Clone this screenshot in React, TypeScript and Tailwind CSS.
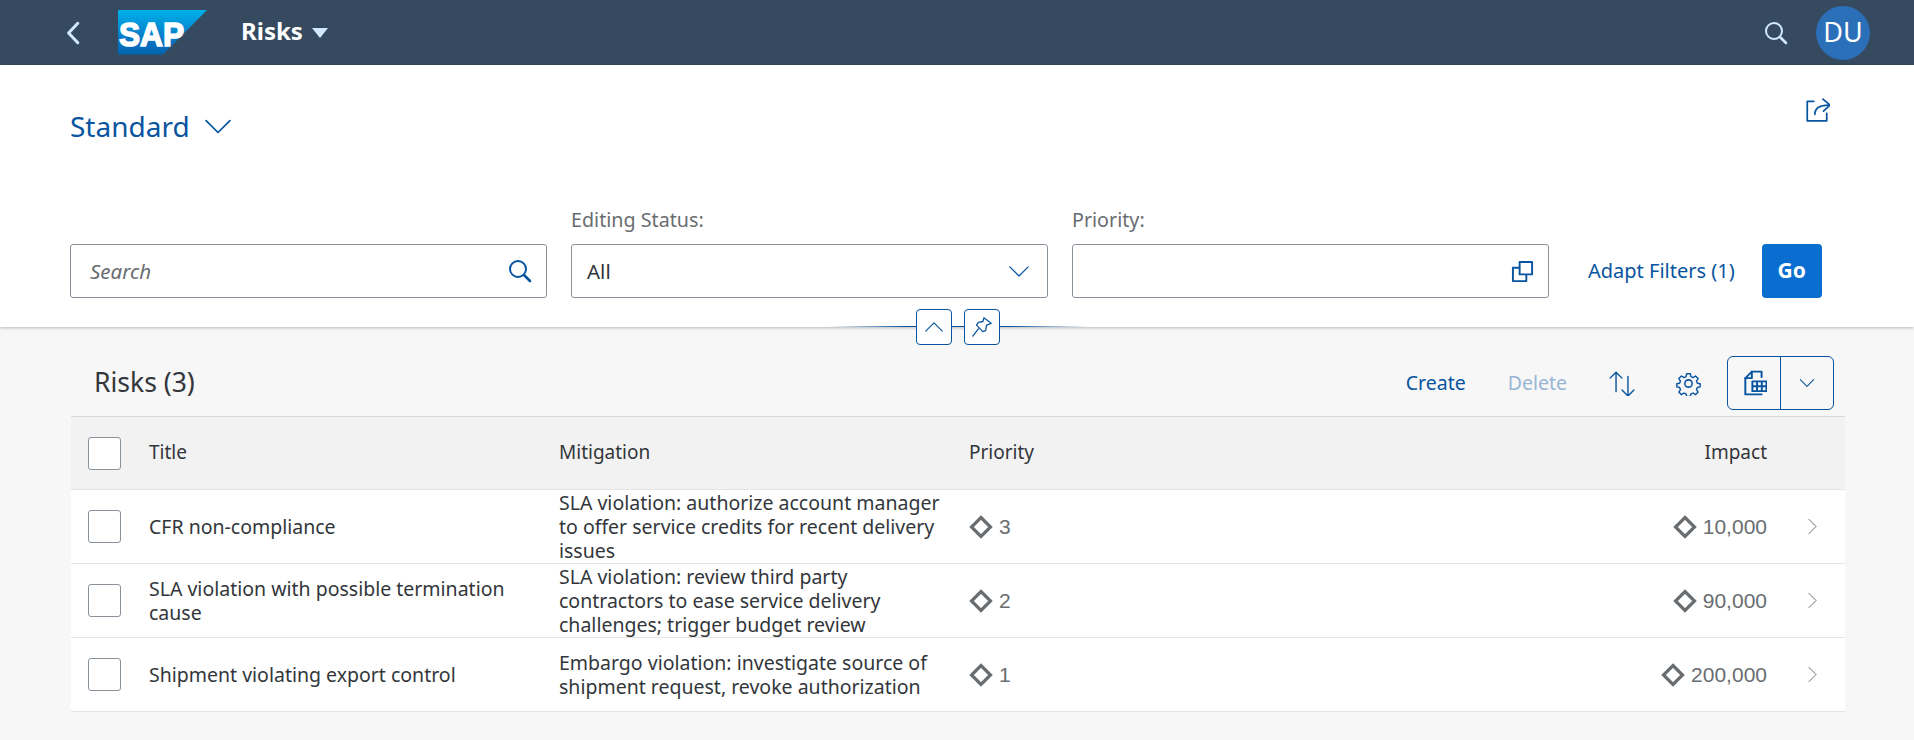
import React from 'react';

const BLUE = '#0854a0';

// Small stroke icon wrapper, every icon below is drawn on a 24 box
const Ico = ({ size = 24, color = BLUE, sw = 1.6, children }: { size?: number; color?: string; sw?: number; children: React.ReactNode }) => (
  <svg width={size} height={size} viewBox="0 0 24 24" fill="none" stroke={color} strokeWidth={sw} strokeLinecap="round" strokeLinejoin="round" className="shrink-0">
    {children}
  </svg>
);

const SearchIcon = ({ color = BLUE, size = 24, sw = 2 }: { color?: string; size?: number; sw?: number }) => (
  <Ico color={color} size={size} sw={sw}>
    <circle cx="10" cy="10" r="8" />
    <path d="M16 16l6 6" strokeWidth={sw + 0.6} />
  </Ico>
);

const Diamond = () => (
  <svg width="24" height="24" viewBox="0 0 24 24" fill="none" stroke="#6a6d70" strokeWidth="3.2" className="shrink-0">
    <path d="M12 2.500L21.500 12 12 21.500 2.500 12z" />
  </svg>
);

const SapLogo = () => (
  <svg width="90" height="45" viewBox="0 0 90 45" className="shrink-0">
    <defs>
      <linearGradient id="sapG" x1="0" y1="0" x2="0" y2="1">
        <stop offset="0" stopColor="#00b1eb" />
        <stop offset="0.75" stopColor="#0a6fc0" />
        <stop offset="1" stopColor="#0064b0" />
      </linearGradient>
    </defs>
    <path d="M0 0H89L45 44.500H0z" fill="url(#sapG)" />
    <text x="1" y="36" fontFamily="'Liberation Sans', sans-serif" fontWeight="700" fontSize="34" fill="#fff" stroke="#fff" strokeWidth="1.6" textLength="65" lengthAdjust="spacingAndGlyphs">SAP</text>
  </svg>
);

const Checkbox = () => <div className="w-[33px] h-[33px] bg-white border border-[#89919a] rounded-[3px] shrink-0" />;

const FILTER_FIELD = 'w-[477px] h-[54px] bg-white border border-[#89919a] rounded-[3px] flex items-center justify-between';

const ROWS = [
  {
    title: ['CFR non-compliance'],
    mitigation: ['SLA violation: authorize account manager', 'to offer service credits for recent delivery', 'issues'],
    priority: '3',
    impact: '10,000',
  },
  {
    title: ['SLA violation with possible termination', 'cause'],
    mitigation: ['SLA violation: review third party', 'contractors to ease service delivery', 'challenges; trigger budget review'],
    priority: '2',
    impact: '90,000',
  },
  {
    title: ['Shipment violating export control'],
    mitigation: ['Embargo violation: investigate source of', 'shipment request, revoke authorization'],
    priority: '1',
    impact: '200,000',
  },
];

const COLS = 'grid grid-cols-[78px_410px_410px_388px_410px_1fr]';

const App: React.FC = () => {
  return (
    <div className="w-[1914px] h-[740px] overflow-hidden bg-[#f7f7f7] font-['Noto_Sans',sans-serif] text-[#32363a]">
      {/* Shell bar */}
      <header className="h-[65px] bg-[#354a5f] flex items-center">
        <div className="ml-[61px] w-[57px]">
          <Ico size={26} color="#d1e8ff" sw={2.8}>
            <path d="M15.500 3L7 12l8.500 9" />
          </Ico>
        </div>
        <SapLogo />
        <span className="ml-[33px] mb-[3px] text-[24px] leading-none font-bold text-white">Risks</span>
        <svg width="16" height="10" viewBox="0 0 16 10" className="ml-[9px]">
          <path d="M0 0H16L8 10z" fill="#d1e8ff" />
        </svg>
        <div className="ml-auto mr-[44px] flex items-center gap-[28px]">
          <SearchIcon color="#d1e8ff" size={24} sw={2} />
          <div className="w-[54px] h-[54px] rounded-full bg-[#2a6fb8] text-white text-[27px] flex items-center justify-center">DU</div>
        </div>
      </header>

      {/* Filter area */}
      <section className="relative h-[262px] bg-white shadow-[0_1px_3px_rgba(0,0,0,0.25)] px-[70px]">
        <div className="flex justify-between items-start">
          <div className="flex items-center gap-[15px] pt-[39px] text-[#0854a0]">
            <span className="text-[28px] leading-[44px]">Standard</span>
            <Ico size={26} sw={1.6}>
              <path d="M1 7l11 11L23 7" />
            </Ico>
          </div>
          <div className="pt-[32px] pr-[14px]">
            <Ico size={26} sw={1.6}>
              <path d="M9 4H3v18h18v-7" />
              <path d="M10 16c0-5 4-8.500 13-8.500" />
              <path d="M17.500 2L24 7.500 18 13" />
            </Ico>
          </div>
        </div>

        <div className="flex items-end mt-[60px]">
          <div className={`${FILTER_FIELD} pl-[19px] pr-[14px]`}>
            <span className="italic text-[#6a6d70] text-[20.500px]">Search</span>
            <SearchIcon />
          </div>
          <div className="ml-[24px]">
            <div className="text-[#6a6d70] text-[19.700px] leading-[24px] mb-[12px]">Editing Status:</div>
            <div className={`${FILTER_FIELD} pl-[15px] pr-[18px]`}>
              <span className="text-[20.500px]">All</span>
              <Ico size={20} sw={1.5}>
                <path d="M1 7l11 11L23 7" />
              </Ico>
            </div>
          </div>
          <div className="ml-[24px]">
            <div className="text-[#6a6d70] text-[19.700px] leading-[24px] mb-[12px]">Priority:</div>
            <div className={`${FILTER_FIELD} pr-[14px] justify-end`}>
              <Ico size={23} sw={2}>
                <path d="M8 8H2v14h14v-6" />
                <path d="M9 2h13v13H9z" />
              </Ico>
            </div>
          </div>
          <div className="ml-[39px] h-[54px] flex items-center text-[#0854a0] text-[20px]">Adapt Filters (1)</div>
          <div className="ml-[27px] w-[60px] h-[54px] rounded-[4px] bg-[#0a6ed1] text-white text-[21px] font-bold flex items-center justify-center">Go</div>
        </div>

        {/* Collapse and pin handle on the edge of the panel */}
        <div className="absolute left-[828px] top-[244px] w-[260px] h-[36px] flex items-center justify-center">
          <div className="absolute left-0 right-0 top-[17px] h-px bg-[linear-gradient(90deg,transparent,#0854a0_30%,#0854a0_70%,transparent)]" />
          <div className="relative flex gap-[12px]">
            <div className="w-[36px] h-[36px] bg-white border border-[#0854a0] rounded-[4px] flex items-center justify-center">
              <Ico size={20} sw={1.4}>
                <path d="M2 17L12 7l10 10" />
              </Ico>
            </div>
            <div className="w-[36px] h-[36px] bg-white border border-[#0854a0] rounded-[4px] flex items-center justify-center">
              <Ico size={22} sw={1.4}>
                <path d="M14 2l8 6-5 2-1 6-3 1-7-7 2-3 5-1z" />
                <path d="M8 14l-6 8" />
              </Ico>
            </div>
          </div>
        </div>
      </section>

      {/* Table */}
      <section className="pl-[71px] pr-[69px]">
        <div className="h-[89px] flex items-center pl-[23px] pr-[11px] pt-[23px]">
          <h2 className="text-[26.500px] font-normal">Risks (3)</h2>
          <div className="ml-auto flex items-center">
            <span className="text-[#0854a0] text-[19.500px]">Create</span>
            <span className="ml-[42px] text-[#0854a0] opacity-40 text-[19.500px]">Delete</span>
            <div className="ml-[42px]">
              <Ico size={26} sw={1.3}>
                <path d="M6.500 20V2M1 7.500L6.500 2 12 7.500" />
                <path d="M17.500 6v18M12 18.500l5.500 5.500 5.500-5.500" />
              </Ico>
            </div>
            <div className="ml-[41px]">
              <Ico size={25} sw={1.5}>
                <circle cx="12" cy="12" r="3.500" />
                <path d="M10 1.500h4l.6 3.200 2.300 1 2.700-1.800 2.800 2.800-1.800 2.700 1 2.300 3 .6v3.400l-3 .6-1 2.300 1.800 2.700-2.800 2.800-2.700-1.800-2.300 1-.6 2.700h-4l-.6-2.700-2.300-1-2.700 1.800-2.800-2.800 1.800-2.700-1-2.300-3-.6v-3.400l3-.6 1-2.300-1.800-2.700 2.800-2.800 2.700 1.800 2.300-1z" transform="translate(1.300 1.300) scale(.89)" />
              </Ico>
            </div>
            <div className="ml-[26px] w-[107px] h-[54px] border border-[#0854a0] rounded-[6px] flex items-center">
              <div className="w-[53px] h-full border-r border-[#0854a0] flex items-center justify-center">
                <Ico size={26} sw={1.8}>
                  <path d="M10 1.500h9v5M10 1.500L4 7.500v15h15" />
                  <path d="M10 1.500v6H4" />
                  <path d="M10.500 10.500h13v9h-13zM10.500 15h13M14.800 10.500v9M19.200 10.500v9" />
                </Ico>
              </div>
              <div className="flex-1 flex items-center justify-center">
                <Ico size={16} sw={1.6}>
                  <path d="M2 7l10 10L22 7" />
                </Ico>
              </div>
            </div>
          </div>
        </div>

        <div className="border-t border-[#d9d9d9] bg-white">
          <div className={`${COLS} h-[73px] bg-[#f2f2f2] border-b border-[#e4e4e4] items-center text-[19px] leading-[24px] pb-[3px]`}>
            <div className="pl-[17px] pt-[3px]"><Checkbox /></div>
            <div>Title</div>
            <div>Mitigation</div>
            <div>Priority</div>
            <div className="text-right">Impact</div>
            <div />
          </div>
          {ROWS.map(row => (
            <div key={row.impact} className={`${COLS} h-[74px] border-b border-[#e4e4e4] items-center text-[19.500px] leading-[24px]`}>
              <div className="pl-[17px]"><Checkbox /></div>
              <div>
                {row.title.map(l => <div key={l}>{l}</div>)}
              </div>
              <div>
                {row.mitigation.map(l => <div key={l}>{l}</div>)}
              </div>
              <div className="flex items-center gap-[6px] text-[#6a6d70] text-[21px] font-['Liberation_Sans',sans-serif]">
                <Diamond />
                <span>{row.priority}</span>
              </div>
              <div className="flex items-center justify-end gap-[6px] text-[#6a6d70] text-[21px] font-['Liberation_Sans',sans-serif]">
                <Diamond />
                <span>{row.impact}</span>
              </div>
              <div className="pl-[37px]">
                <Ico size={17} color="#6a6d70" sw={1.4}>
                  <path d="M7 2l10 10L7 22" />
                </Ico>
              </div>
            </div>
          ))}
        </div>
      </section>
    </div>
  );
};

export default App;
